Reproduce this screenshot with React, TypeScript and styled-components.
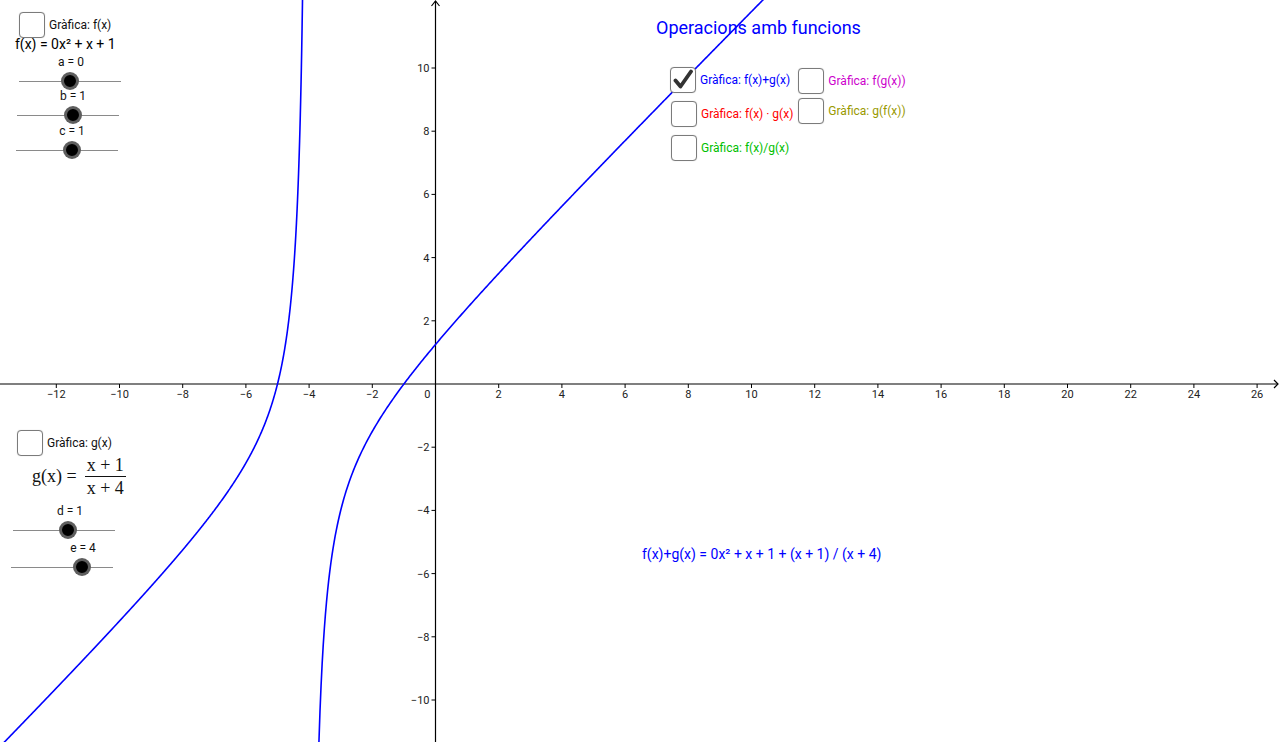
import React from "react";
import styled, { createGlobalStyle } from "styled-components";

const GlobalStyle = createGlobalStyle`
  html, body {
    margin: 0;
    padding: 0;
    background: #ffffff;
  }
  body {
    font-family: Roboto, "Noto Sans", "Liberation Sans", sans-serif;
  }
`;

const W = 1280;
const H = 742;
const X0 = 435.5;
const Y0 = 384;
const UNIT = 31.6;

const px = (x: number) => X0 + x * UNIT;
const py = (y: number) => Y0 - y * UNIT;

// f(x)+g(x) with a=0, b=1, c=1, d=1, e=4
const sum = (x: number) => x + 1 + (x + 1) / (x + 4);

function branch(from: number, to: number): string {
  const pts: string[] = [];
  const steps = 900;
  for (let i = 0; i <= steps; i++) {
    const x = from + ((to - from) * i) / steps;
    let y = sum(x);
    if (y > 40) y = 40;
    if (y < -40) y = -40;
    pts.push(`${px(x).toFixed(2)},${py(y).toFixed(2)}`);
  }
  return "M" + pts.join(" L");
}

const Applet = styled.div`
  position: relative;
  width: ${W}px;
  height: ${H}px;
  overflow: hidden;
  background: #ffffff;
`;

const Graph = styled.svg`
  position: absolute;
  inset: 0;
  display: block;
`;

const AxisLabel = styled.text`
  font-family: Roboto, "Liberation Sans", sans-serif;
  font-size: 11px;
  fill: #222;
`;

/* panels of controls floating over the graphics view */
const Panel = styled.div<{ $x: number; $y: number }>`
  position: absolute;
  left: ${(p) => p.$x}px;
  top: ${(p) => p.$y}px;
  display: flex;
  flex-direction: column;
  align-items: flex-start;
`;

const CheckRow = styled.div<{ $indent?: number }>`
  display: flex;
  align-items: center;
  gap: 4px;
  margin-left: ${(p) => p.$indent ?? 0}px;
  white-space: nowrap;
`;

const Box = styled.span`
  position: relative;
  box-sizing: border-box;
  width: 26px;
  height: 26px;
  border: 1.5px solid #7b7b7b;
  border-radius: 4px;
  background: #fff;
  box-shadow: 0 0 1px rgba(0, 0, 0, 0.25);
  flex: none;
`;

const Tick = styled.svg`
  position: absolute;
  left: 1px;
  top: 1px;
`;

const CheckLabel = styled.span<{ $color: string }>`
  font-size: 12px;
  color: ${(p) => p.$color};
  line-height: 14px;
`;

const Title = styled.div`
  font-size: 18px;
  line-height: 22px;
  color: #0000ff;
  white-space: nowrap;
`;

const Options = styled.div`
  display: flex;
  gap: 5px;
  margin: 28px 0 0 14px;
`;

const OptionColumn = styled.div<{ $gap: number; $top?: number }>`
  display: flex;
  flex-direction: column;
  gap: ${(p) => p.$gap}px;
  margin-top: ${(p) => p.$top ?? 0}px;
`;

const Formula = styled.div<{ $color?: string; $top?: number }>`
  font-size: 14px;
  line-height: 16px;
  margin-top: ${(p) => p.$top ?? 0}px;
  color: ${(p) => p.$color ?? "#000"};
  white-space: nowrap;
`;

const FloatingFormula = styled(Formula)<{ $x: number; $y: number }>`
  position: absolute;
  left: ${(p) => p.$x}px;
  top: ${(p) => p.$y}px;
`;

const MathBlock = styled.div`
  display: flex;
  align-items: center;
  gap: 8px;
  margin: -1px 0 0 21px;
  font-family: "Liberation Serif", "DejaVu Serif", serif;
  font-size: 18px;
  color: #111;
`;

const Fraction = styled.span`
  display: inline-flex;
  flex-direction: column;
  align-items: center;
  line-height: 20px;
`;

const Numer = styled.span`
  padding: 0 2px 1px;
  border-bottom: 1px solid #111;
`;

const Denom = styled.span`
  padding: 1px 2px 0;
`;

const Slider = styled.div<{ $indent?: number; $top?: number }>`
  position: relative;
  width: 102px;
  height: 34px;
  margin-left: ${(p) => p.$indent ?? 0}px;
  margin-top: ${(p) => p.$top ?? 0}px;
`;

const SliderCaption = styled.div`
  position: absolute;
  top: 0;
  transform: translateX(-50%);
  font-size: 12px;
  line-height: 14px;
  color: #111;
  white-space: nowrap;
`;

const Track = styled.div`
  position: absolute;
  left: 0;
  right: 0;
  top: 26px;
  height: 1px;
  background: #8a8a8a;
`;

const Knob = styled.div`
  position: absolute;
  top: 17px;
  margin-left: -9px;
  width: 12px;
  height: 12px;
  border-radius: 50%;
  background: #000;
  border: 3px solid rgba(110, 110, 110, 0.85);
`;

function CheckBox({ checked }: { checked?: boolean }) {
  return (
    <Box>
      {checked && (
        <Tick width="22" height="22" viewBox="0 0 22 22">
          <path d="M3.5 11.5 L8.5 17.5 L19 2.5" fill="none" stroke="#333" strokeWidth="3.8" strokeLinecap="round" strokeLinejoin="round" />
        </Tick>
      )}
    </Box>
  );
}

function Check({ label, color, checked, indent }: { label: string; color: string; checked?: boolean; indent?: number }) {
  return (
    <CheckRow $indent={indent}>
      <CheckBox checked={checked} />
      <CheckLabel $color={color}>{label}</CheckLabel>
    </CheckRow>
  );
}

function ValueSlider({ label, captionAt, knobAt, indent, top }: { label: string; captionAt: number; knobAt: number; indent?: number; top?: number }) {
  return (
    <Slider $indent={indent} $top={top}>
      <SliderCaption style={{ left: captionAt }}>{label}</SliderCaption>
      <Track />
      <Knob style={{ left: knobAt }} />
    </Slider>
  );
}

const fmt = (n: number) => (n < 0 ? `\u2212${-n}` : `${n}`);

function Axes() {
  const xTicks: number[] = [];
  for (let v = -12; v <= 26; v += 2) if (v !== 0) xTicks.push(v);
  const yTicks: number[] = [];
  for (let v = -10; v <= 10; v += 2) if (v !== 0) yTicks.push(v);
  return (
    <g>
      <line x1={0} y1={Y0} x2={W - 2} y2={Y0} stroke="#000" strokeWidth={1.2} />
      <path d={`M${W - 6} ${Y0 - 4} L${W - 2} ${Y0} L${W - 6} ${Y0 + 4}`} fill="none" stroke="#000" strokeWidth={1.2} />
      <line x1={X0} y1={1} x2={X0} y2={H} stroke="#000" strokeWidth={1.2} />
      <path d={`M${X0 - 4} 6 L${X0} 1 L${X0 + 4} 6`} fill="none" stroke="#000" strokeWidth={1.2} />
      {xTicks.map((v) => (
        <g key={`x${v}`}>
          <line x1={px(v)} y1={Y0} x2={px(v)} y2={Y0 + 4} stroke="#000" />
          <AxisLabel x={px(v)} y={Y0 + 14} textAnchor="middle">
            {fmt(v)}
          </AxisLabel>
        </g>
      ))}
      {yTicks.map((v) => (
        <g key={`y${v}`}>
          <line x1={X0 - 4} y1={py(v)} x2={X0} y2={py(v)} stroke="#000" />
          <AxisLabel x={X0 - 6} y={py(v) + 4} textAnchor="end">
            {fmt(v)}
          </AxisLabel>
        </g>
      ))}
      <AxisLabel x={X0 - 5} y={Y0 + 14} textAnchor="end">
        0
      </AxisLabel>
    </g>
  );
}

export default function App() {
  const left = branch((0 - X0) / UNIT - 0.2, -4.0008);
  const right = branch(-3.9992, (W - X0) / UNIT + 0.2);
  return (
    <Applet>
      <GlobalStyle />
      <Graph width={W} height={H} viewBox={`0 0 ${W} ${H}`}>
        <Axes />
        <path d={left} fill="none" stroke="#0000ff" strokeWidth={1.6} />
        <path d={right} fill="none" stroke="#0000ff" strokeWidth={1.6} />
      </Graph>

      <Panel $x={15} $y={12}>
        <Check label="Gràfica: f(x)" color="#111" indent={4} />
        <Formula $top={-2}>f(x) = 0x² + x + 1</Formula>
        <ValueSlider label="a = 0" captionAt={52} knobAt={51} indent={4} top={3} />
        <ValueSlider label="b = 1" captionAt={56} knobAt={56} indent={2} />
        <ValueSlider label="c = 1" captionAt={56} knobAt={56} indent={1} top={1} />
      </Panel>

      <Panel $x={11} $y={430}>
        <Check label="Gràfica: g(x)" color="#111" indent={6} />
        <MathBlock>
          <span>g(x) =</span>
          <Fraction>
            <Numer>x + 1</Numer>
            <Denom>x + 4</Denom>
          </Fraction>
        </MathBlock>
        <ValueSlider label="d = 1" captionAt={57} knobAt={55} indent={2} top={6} />
        <ValueSlider label="e = 4" captionAt={72} knobAt={71} top={3} />
      </Panel>

      <Panel $x={656} $y={17}>
        <Title>Operacions amb funcions</Title>
        <Options>
          <OptionColumn $gap={8}>
            <Check label="Gràfica: f(x)+g(x)" color="#0000ff" checked />
            <Check label="Gràfica: f(x) · g(x)" color="#ff0000" indent={1} />
            <Check label="Gràfica: f(x)/g(x)" color="#00c000" indent={1} />
          </OptionColumn>
          <OptionColumn $gap={4} $top={1}>
            <Check label="Gràfica: f(g(x))" color="#cc00cc" />
            <Check label="Gràfica: g(f(x))" color="#999900" />
          </OptionColumn>
        </Options>
      </Panel>

      <FloatingFormula $x={642} $y={546} $color="#0000ff">
        f(x)+g(x) = 0x² + x + 1 + (x + 1) / (x + 4)
      </FloatingFormula>
    </Applet>
  );
}
